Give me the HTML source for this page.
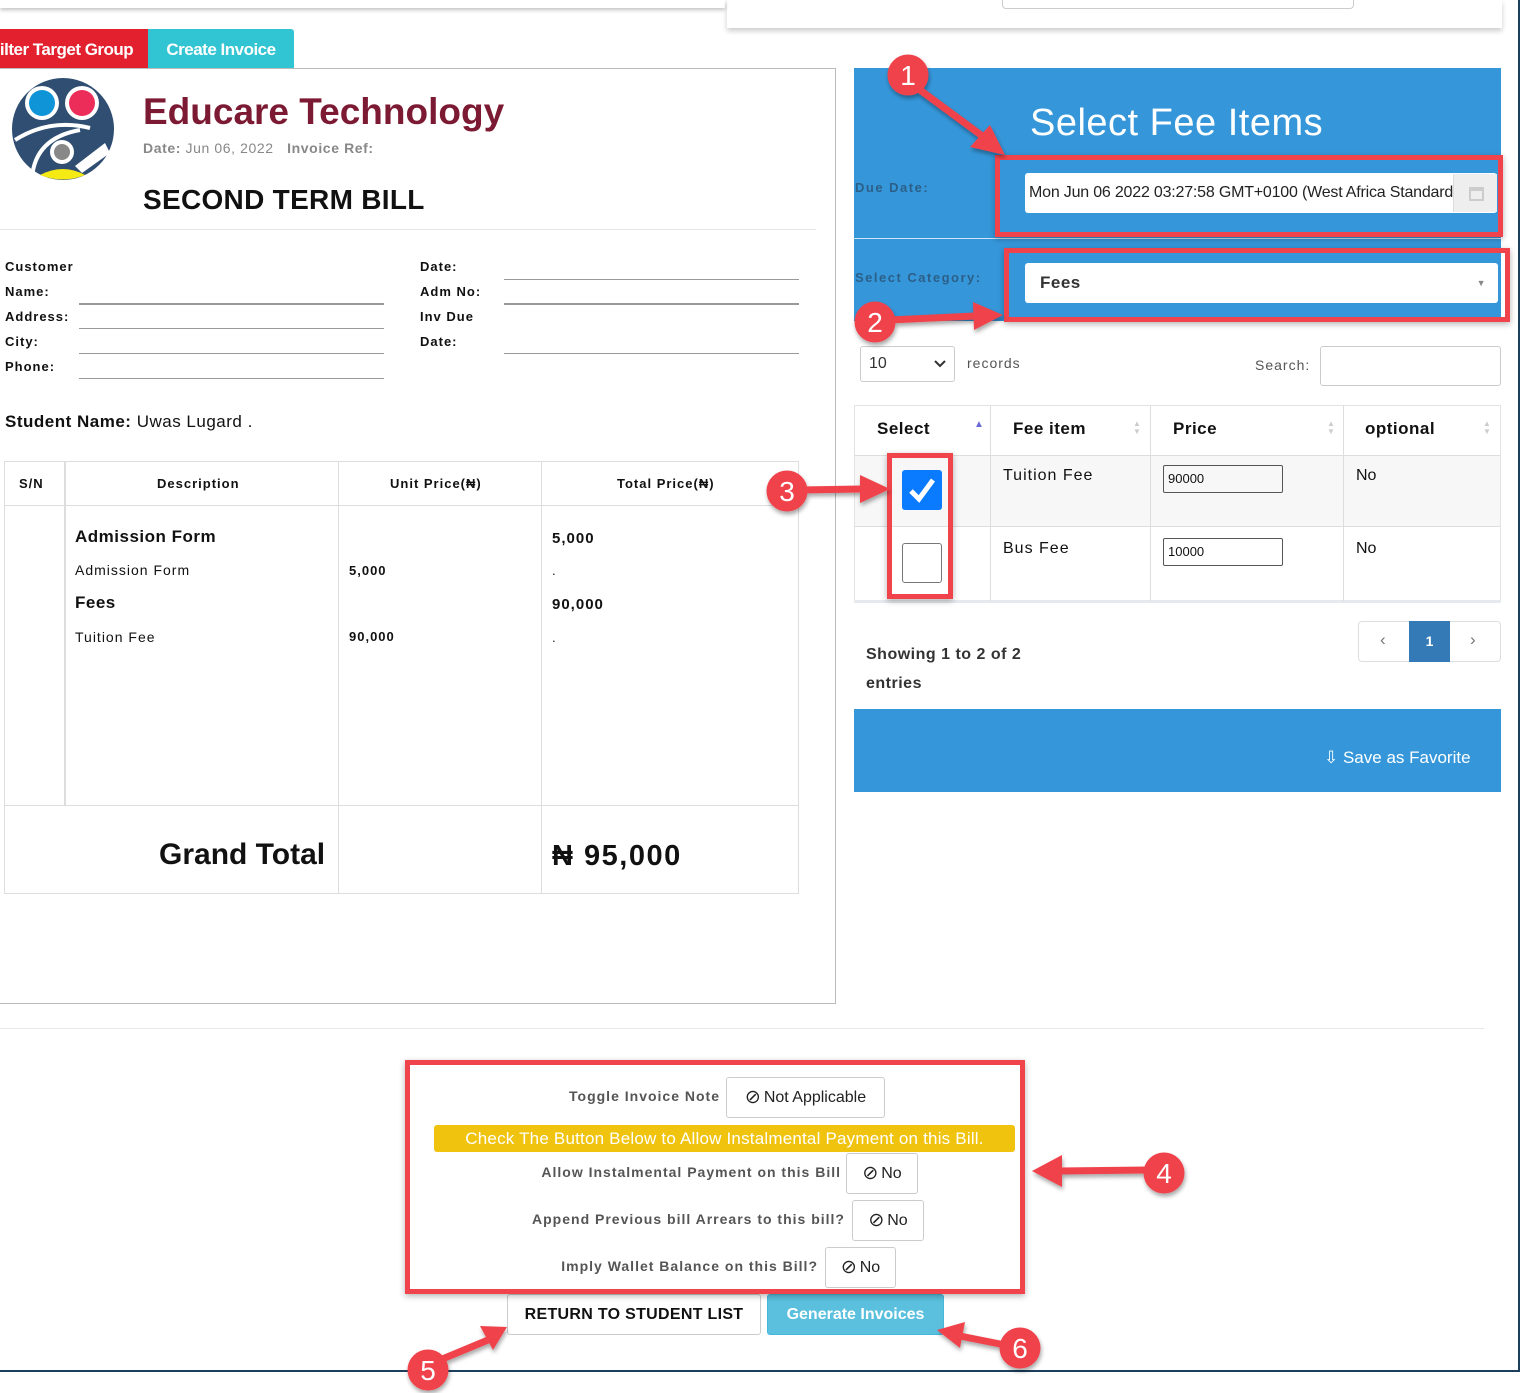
<!DOCTYPE html>
<html><head><meta charset="utf-8"><style>
*{box-sizing:border-box;margin:0;padding:0}
body{width:1533px;height:1393px;position:relative;background:#fff;font-family:"Liberation Sans",sans-serif;overflow:hidden;color:#111}
.a{position:absolute}
.lbl{font-size:13px;font-weight:bold;letter-spacing:1px;color:#111}
.ul{position:absolute;height:1px;background:#999}
.b{font-weight:bold}
.btn{position:absolute;border:1px solid #ccc;border-radius:3px;background:#fff;font-size:16px;color:#222;display:flex;align-items:center;justify-content:center}
.btn i{font-style:normal;font-size:19px;margin-right:3px}
.ol{position:absolute;font-size:14px;font-weight:bold;letter-spacing:1px;color:#555;text-align:right}
.rbox{position:absolute;border:5px solid #f0434b}
</style></head><body>
<div class="a" style="left:0;top:0;width:725px;height:8px;box-shadow:0 2px 4px rgba(0,0,0,.25)"></div>
<div class="a" style="left:727px;top:0;width:775px;height:28px;box-shadow:0 3px 5px rgba(0,0,0,.2)"></div>
<div class="a" style="left:1002px;top:0;width:352px;height:9px;border:1px solid #ccc;border-top:none;border-radius:0 0 4px 4px"></div>
<div class="a" style="left:1518px;top:0;width:2px;height:1371px;background:#1d3f5e"></div>
<div class="a" style="left:0;top:1370px;width:1520px;height:2px;background:#1d3f5e"></div>

<div class="a" style="left:0;top:29px;width:148px;height:40px;background:#e3202e;color:#fff;font-size:17px;font-weight:bold;line-height:42px;letter-spacing:-0.5px;white-space:nowrap;overflow:hidden"><span style="margin-left:-10px">Filter Target Group</span></div>
<div class="a" style="left:148px;top:29px;width:146px;height:40px;background:#31c4d2;color:#fff;font-size:17px;font-weight:bold;line-height:42px;text-align:center;letter-spacing:-0.5px;border-radius:0 3px 0 0">Create Invoice</div>

<div class="a" style="left:-2px;top:68px;width:838px;height:936px;border:1px solid #bbb"></div>
<svg class="a" style="left:10px;top:78px" width="106" height="102" viewBox="0 0 106 102">
<circle cx="53" cy="51" r="51" fill="#2f4e72"/>
<circle cx="32" cy="25" r="17" fill="#fff"/><circle cx="32" cy="25" r="13" fill="#1094d8"/>
<circle cx="72" cy="25" r="17" fill="#fff"/><circle cx="72" cy="25" r="13" fill="#ec2d5a"/>
<path d="M5 62 Q40 40 80 50" stroke="#fff" stroke-width="4" fill="none"/>
<path d="M22 100 Q25 60 70 52" stroke="#fff" stroke-width="4" fill="none"/>
<circle cx="52" cy="74" r="12" fill="#fff"/><circle cx="52" cy="74" r="8" fill="#888"/>
<path d="M65 88 L95 65 L100 75 L72 95Z" fill="#fff"/>
<path d="M30 97 Q53 85 75 97 Q53 106 30 97Z" fill="#f5ea14"/>
</svg>
<div class="a" style="left:143px;top:91px;font-size:37px;font-weight:bold;color:#7d1a33">Educare Technology</div>
<div class="a" style="left:143px;top:140px;font-size:14px;color:#888;letter-spacing:0.6px"><b>Date:</b> Jun 06, 2022 &nbsp; <b>Invoice Ref:</b></div>
<div class="a" style="left:143px;top:184px;font-size:28px;font-weight:bold;color:#111;letter-spacing:0.3px">SECOND TERM BILL</div>
<div class="a" style="left:0;top:229px;width:816px;height:1px;background:#e5e5e5"></div>

<div class="a lbl" style="left:5px;top:259px">Customer</div>
<div class="a lbl" style="left:5px;top:284px">Name:</div>
<div class="a lbl" style="left:5px;top:309px">Address:</div>
<div class="a lbl" style="left:5px;top:334px">City:</div>
<div class="a lbl" style="left:5px;top:359px">Phone:</div>
<div class="ul" style="left:79px;top:303px;width:305px;height:2px"></div>
<div class="ul" style="left:79px;top:328px;width:305px"></div>
<div class="ul" style="left:79px;top:353px;width:305px"></div>
<div class="ul" style="left:79px;top:378px;width:305px"></div>
<div class="a lbl" style="left:420px;top:259px">Date:</div>
<div class="a lbl" style="left:420px;top:284px">Adm No:</div>
<div class="a lbl" style="left:420px;top:309px">Inv Due</div>
<div class="a lbl" style="left:420px;top:334px">Date:</div>
<div class="ul" style="left:504px;top:279px;width:295px"></div>
<div class="ul" style="left:504px;top:303px;width:295px;height:2px"></div>
<div class="ul" style="left:504px;top:353px;width:295px"></div>
<div class="a" style="left:5px;top:412px;font-size:17px;font-weight:bold;letter-spacing:0.5px">Student Name: <span style="font-weight:normal">Uwas Lugard .</span></div>

<div class="a" style="left:4px;top:461px;width:795px;height:433px;border:1px solid #ddd"></div>
<div class="a" style="left:4px;top:505px;width:795px;height:1px;background:#ddd"></div>
<div class="a" style="left:4px;top:805px;width:795px;height:1px;background:#ddd"></div>
<div class="a" style="left:64px;top:461px;width:2px;height:344px;background:#ddd"></div>
<div class="a" style="left:338px;top:461px;width:1px;height:433px;background:#ddd"></div>
<div class="a" style="left:541px;top:461px;width:1px;height:433px;background:#ddd"></div>
<div class="a lbl" style="left:19px;top:476px">S/N</div>
<div class="a lbl" style="left:157px;top:476px">Description</div>
<div class="a lbl" style="left:390px;top:476px">Unit Price(₦)</div>
<div class="a lbl" style="left:617px;top:476px">Total Price(₦)</div>
<div class="a" style="left:75px;top:527px;font-size:17px;font-weight:bold;letter-spacing:0.5px">Admission Form</div>
<div class="a" style="left:75px;top:562px;font-size:14px;letter-spacing:1px">Admission Form</div>
<div class="a" style="left:75px;top:593px;font-size:17px;font-weight:bold;letter-spacing:0.5px">Fees</div>
<div class="a" style="left:75px;top:629px;font-size:14px;letter-spacing:1px">Tuition Fee</div>
<div class="a b" style="left:349px;top:563px;font-size:13px;letter-spacing:1px">5,000</div>
<div class="a b" style="left:349px;top:629px;font-size:13px;letter-spacing:1px">90,000</div>
<div class="a b" style="left:552px;top:530px;font-size:15px;letter-spacing:1px">5,000</div>
<div class="a" style="left:552px;top:563px;font-size:13px">.</div>
<div class="a b" style="left:552px;top:596px;font-size:15px;letter-spacing:1px">90,000</div>
<div class="a" style="left:552px;top:630px;font-size:13px">.</div>
<div class="a b" style="left:159px;top:838px;font-size:30px">Grand Total</div>
<div class="a b" style="left:552px;top:840px;font-size:29px;letter-spacing:1.5px">₦ 95,000</div>

<div class="a" style="left:854px;top:68px;width:647px;height:170px;background:#3597da"></div>
<div class="a" style="left:854px;top:238px;width:647px;height:1px;background:#cfe4f4"></div>
<div class="a" style="left:854px;top:239px;width:647px;height:82px;background:#3597da"></div>
<div class="a" style="left:1030px;top:102px;font-size:38px;color:#fff;letter-spacing:0.5px">Select Fee Items</div>
<div class="a" style="left:855px;top:180px;font-size:13px;font-weight:bold;color:#2c5f88;letter-spacing:1.5px">Due Date:</div>
<div class="a" style="left:1025px;top:173px;width:472px;height:40px;background:#fff;border-radius:3px;overflow:hidden;font-size:16px;line-height:40px;padding-left:4px;white-space:nowrap;color:#222;letter-spacing:-0.2px">Mon Jun 06 2022 03:27:58 GMT+0100 (West Africa Standard Time)</div>
<div class="a" style="left:1453px;top:174px;width:44px;height:38px;background:#eee;border-left:1px solid #ddd"><div style="position:absolute;left:15px;top:13px;width:15px;height:14px;border:2px solid #ccc;border-top-width:4px"></div></div>
<div class="a" style="left:855px;top:270px;font-size:13px;font-weight:bold;color:#2c5f88;letter-spacing:1.5px">Select Category:</div>
<div class="a" style="left:1025px;top:263px;width:473px;height:40px;background:#fff;border-radius:3px;font-size:17px;font-weight:bold;line-height:40px;padding-left:15px;color:#333;letter-spacing:0.5px">Fees<span style="position:absolute;right:12px;top:0;font-size:9px;color:#888">▼</span></div>

<div class="a" style="left:860px;top:346px;width:95px;height:36px;border:1px solid #ccc;border-radius:3px;font-size:16px;line-height:34px;padding-left:8px;color:#333">10<svg style="position:absolute;right:8px;top:13px" width="12" height="8"><path d="M1 1 L6 6 L11 1" stroke="#333" stroke-width="2" fill="none"/></svg></div>
<div class="a" style="left:967px;top:355px;font-size:14px;color:#555;letter-spacing:1px">records</div>
<div class="a" style="left:1255px;top:357px;font-size:14px;color:#555;letter-spacing:1px">Search:</div>
<div class="a" style="left:1320px;top:346px;width:181px;height:40px;border:1px solid #ccc;border-radius:3px"></div>

<div class="a" style="left:854px;top:405px;width:647px;height:196px;border:1px solid #e3e3e3"></div>
<div class="a" style="left:855px;top:455px;width:645px;height:72px;background:#f7f7f7;border-top:1px solid #ddd;border-bottom:1px solid #ddd"></div>
<div class="a" style="left:854px;top:600px;width:647px;height:3px;background:#e6e9ee"></div>
<div class="a" style="left:990px;top:405px;width:1px;height:196px;background:#ddd"></div>
<div class="a" style="left:1150px;top:405px;width:1px;height:196px;background:#ddd"></div>
<div class="a" style="left:1343px;top:405px;width:1px;height:196px;background:#ddd"></div>
<div class="a b" style="left:877px;top:419px;font-size:17px;letter-spacing:0.5px">Select</div>
<div class="a" style="left:974px;top:419px;font-size:10px;color:#6b6bd6">▲</div>
<div class="a b" style="left:1013px;top:419px;font-size:17px;letter-spacing:0.5px">Fee item</div>
<div class="a b" style="left:1173px;top:419px;font-size:17px;letter-spacing:0.5px">Price</div>
<div class="a b" style="left:1365px;top:419px;font-size:17px;letter-spacing:0.5px">optional</div>
<div class="a" style="left:1133px;top:420px;font-size:8px;color:#ccc;line-height:8px">▲<br>▼</div>
<div class="a" style="left:1327px;top:420px;font-size:8px;color:#ccc;line-height:8px">▲<br>▼</div>
<div class="a" style="left:1483px;top:420px;font-size:8px;color:#ccc;line-height:8px">▲<br>▼</div>
<div class="a" style="left:902px;top:470px;width:40px;height:40px;background:#0a7bff;border-radius:3px"><svg width="40" height="40"><path d="M9 21 L17 29 L31 10" stroke="#fff" stroke-width="5" fill="none"/></svg></div>
<div class="a" style="left:902px;top:543px;width:40px;height:40px;border:1px solid #777;border-radius:3px;background:#fff"></div>
<div class="a" style="left:1003px;top:467px;font-size:16px;letter-spacing:1px">Tuition Fee</div>
<div class="a" style="left:1003px;top:540px;font-size:16px;letter-spacing:1px">Bus Fee</div>
<div class="a" style="left:1163px;top:465px;width:120px;height:28px;border:1px solid #555;border-radius:2px;font-size:13px;line-height:26px;padding-left:4px">90000</div>
<div class="a" style="left:1163px;top:538px;width:120px;height:28px;border:1px solid #555;border-radius:2px;font-size:13px;line-height:26px;padding-left:4px">10000</div>
<div class="a" style="left:1356px;top:467px;font-size:16px">No</div>
<div class="a" style="left:1356px;top:540px;font-size:16px">No</div>

<div class="a b" style="left:866px;top:640px;font-size:16px;line-height:29px;letter-spacing:0.5px;color:#333">Showing 1 to 2 of 2<br>entries</div>
<div class="a" style="left:1358px;top:621px;width:143px;height:41px;border:1px solid #ddd;border-radius:4px"></div>
<div class="a" style="left:1380px;top:630px;font-size:17px;color:#777">‹</div>
<div class="a" style="left:1409px;top:621px;width:41px;height:41px;background:#337ab7;color:#fff;font-size:14px;font-weight:bold;text-align:center;line-height:41px">1</div>
<div class="a" style="left:1470px;top:630px;font-size:17px;color:#777">›</div>
<div class="a" style="left:854px;top:709px;width:647px;height:83px;background:#3597da"></div>
<div class="a" style="left:1324px;top:748px;font-size:17px;color:#fff">⇩ Save as Favorite</div>

<div class="a" style="left:0;top:1028px;width:1484px;height:1px;background:#e8e8e8"></div>

<div class="ol" style="left:400px;top:1088px;width:320px">Toggle Invoice Note</div>
<div class="btn" style="left:726px;top:1077px;width:159px;height:41px"><i>⊘</i>Not Applicable</div>
<div class="a" style="left:434px;top:1125px;width:581px;height:27px;background:#f0c30f;border-radius:3px;color:#fff;font-size:17px;line-height:27px;text-align:center;letter-spacing:0.2px">Check The Button Below to Allow Instalmental Payment on this Bill.</div>
<div class="ol" style="left:400px;top:1164px;width:441px">Allow Instalmental Payment on this Bill</div>
<div class="btn" style="left:846px;top:1153px;width:72px;height:41px"><i>⊘</i>No</div>
<div class="ol" style="left:400px;top:1211px;width:445px">Append Previous bill Arrears to this bill?</div>
<div class="btn" style="left:852px;top:1200px;width:72px;height:41px"><i>⊘</i>No</div>
<div class="ol" style="left:400px;top:1258px;width:418px">Imply Wallet Balance on this Bill?</div>
<div class="btn" style="left:825px;top:1247px;width:71px;height:41px"><i>⊘</i>No</div>
<div class="btn" style="left:507px;top:1294px;width:254px;height:41px;font-weight:bold;font-size:16px;color:#111;letter-spacing:0.3px">RETURN TO STUDENT LIST</div>
<div class="btn" style="left:767px;top:1294px;width:177px;height:41px;background:#5bc0de;border-color:#46b8da;color:#fff;font-weight:bold">Generate Invoices</div>

<div class="rbox" style="left:995px;top:155px;width:508px;height:82px;box-shadow:0 2px 6px rgba(0,0,0,.3)"></div>
<div class="rbox" style="left:1004px;top:248px;width:506px;height:74px;box-shadow:0 2px 6px rgba(0,0,0,.3)"></div>
<div class="rbox" style="left:887px;top:453px;width:66px;height:146px;box-shadow:0 2px 6px rgba(0,0,0,.3)"></div>
<div class="rbox" style="left:405px;top:1060px;width:620px;height:234px;box-shadow:0 2px 6px rgba(0,0,0,.3)"></div>
<svg class="a" style="left:0;top:0" width="1533" height="1393">
<defs><filter id="s"><feDropShadow dx="1" dy="3" stdDeviation="2" flood-opacity="0.35"/></filter></defs>
<g fill="#f0434b" stroke="#f0434b" filter="url(#s)">
<line x1="920" y1="90" x2="985" y2="138" stroke-width="7"/><polygon points="1005,155 970,147 990,125" stroke="none"/>
<line x1="890" y1="320" x2="975" y2="316" stroke-width="7"/><polygon points="1003,315 973,302 974,330" stroke="none"/>
<line x1="800" y1="490" x2="862" y2="489" stroke-width="7"/><polygon points="890,489 860,475 860,503" stroke="none"/>
<line x1="1148" y1="1170" x2="1060" y2="1171" stroke-width="7"/><polygon points="1032,1171 1062,1155 1062,1187" stroke="none"/>
<line x1="440" y1="1360" x2="488" y2="1340" stroke-width="7"/><polygon points="507,1327 480,1326 493,1350" stroke="none"/>
<line x1="1005" y1="1345" x2="960" y2="1336" stroke-width="7"/><polygon points="937,1330 965,1322 960,1348" stroke="none"/>
<circle cx="908" cy="75" r="20"/><circle cx="875" cy="322" r="20"/><circle cx="787" cy="491" r="20"/>
<circle cx="1164" cy="1173" r="20"/><circle cx="428" cy="1370" r="20"/><circle cx="1020" cy="1348" r="20"/>
</g>
<g fill="#fff" font-family="Liberation Sans" font-size="28" text-anchor="middle">
<text x="908" y="85">1</text><text x="875" y="332">2</text><text x="787" y="501">3</text>
<text x="1164" y="1183">4</text><text x="428" y="1380">5</text><text x="1020" y="1358">6</text>
</g>
</svg>
</body></html>
